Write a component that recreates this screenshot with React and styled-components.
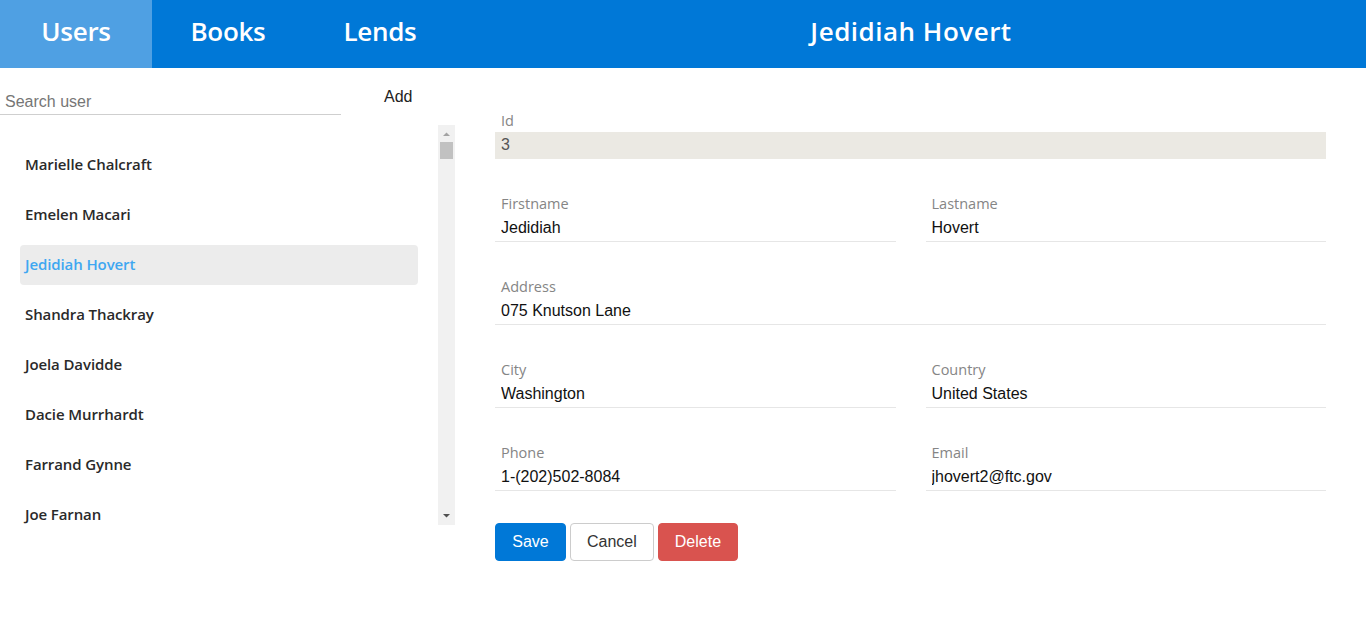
import React, { useState } from 'react'
import styled, { createGlobalStyle } from 'styled-components'

const GlobalStyle = createGlobalStyle`
    html, body {
        margin: 0;
        padding: 0;
        background: #fff;
    }
    * {
        box-sizing: border-box;
    }
`

const users = [
    'Marielle Chalcraft',
    'Emelen Macari',
    'Jedidiah Hovert',
    'Shandra Thackray',
    'Joela Davidde',
    'Dacie Murrhardt',
    'Farrand Gynne',
    'Joe Farnan',
]

const App = () => {
    const [selected, setSelected] = useState(2)
    const [search, setSearch] = useState('')

    return (
        <Layout>
            <GlobalStyle />
            <Header>
                <Tab active>Users</Tab>
                <Tab>Books</Tab>
                <Tab>Lends</Tab>
                <Title>Jedidiah Hovert</Title>
            </Header>
            <Main>
                <Sidebar>
                    <SearchRow>
                        <SearchInput
                            placeholder="Search user"
                            value={search}
                            onChange={(e) => setSearch(e.target.value)}
                        />
                        <AddButton>Add</AddButton>
                    </SearchRow>
                    <ListBox>
                        <UserList>
                            {users.map((name, i) => (
                                <UserItem key={name} active={i === selected} onClick={() => setSelected(i)}>
                                    {name}
                                </UserItem>
                            ))}
                        </UserList>
                        <ScrollTrack>
                            <ScrollArrow>
                                <svg width="17" height="17" viewBox="0 0 17 17">
                                    <polygon points="5,11 8.5,7.5 12,11" fill="#a3a3a3" />
                                </svg>
                            </ScrollArrow>
                            <ScrollThumb />
                            <ScrollSpace />
                            <ScrollArrow>
                                <svg width="17" height="17" viewBox="0 0 17 17">
                                    <polygon points="5,6 8.5,9.5 12,6" fill="#505050" />
                                </svg>
                            </ScrollArrow>
                        </ScrollTrack>
                    </ListBox>
                </Sidebar>
                <Form>
                    <Field>
                        <Label>Id</Label>
                        <Input readOnly disabledLook value="3" />
                    </Field>
                    <Row>
                        <Field>
                            <Label>Firstname</Label>
                            <Input defaultValue="Jedidiah" />
                        </Field>
                        <Field>
                            <Label>Lastname</Label>
                            <Input defaultValue="Hovert" />
                        </Field>
                    </Row>
                    <Field>
                        <Label>Address</Label>
                        <Input defaultValue="075 Knutson Lane" />
                    </Field>
                    <Row>
                        <Field>
                            <Label>City</Label>
                            <Input defaultValue="Washington" />
                        </Field>
                        <Field>
                            <Label>Country</Label>
                            <Input defaultValue="United States" />
                        </Field>
                    </Row>
                    <Row>
                        <Field>
                            <Label>Phone</Label>
                            <Input defaultValue="1-(202)502-8084" />
                        </Field>
                        <Field>
                            <Label>Email</Label>
                            <Input defaultValue="jhovert2@ftc.gov" />
                        </Field>
                    </Row>
                    <Buttons>
                        <Button kind="primary">Save</Button>
                        <Button>Cancel</Button>
                        <Button kind="danger">Delete</Button>
                    </Buttons>
                </Form>
            </Main>
        </Layout>
    )
}

export default App


const Layout = styled.div`
    min-height: 100vh;
    width: 100%;
    display: flex;
    flex-direction: column;
`

const Header = styled.header`
    height: 68px;
    display: flex;
    background-color: #0078d7;
    font-family: "Open Sans", "Noto Sans", sans-serif;
    color: #fff;
`

const Tab = styled.div`
    width: 152px;
    display: flex;
    align-items: center;
    justify-content: center;
    padding-bottom: 7px;
    font-size: 26px;
    font-weight: 600;
    letter-spacing: -0.3px;
    background-color: ${(props) => (props.active ? '#4fa0e3' : 'transparent')};
    cursor: pointer;
`

const Title = styled.h1`
    flex: 1;
    margin: 0;
    display: flex;
    align-items: center;
    justify-content: center;
    padding-bottom: 7px;
    font-size: 26px;
    font-weight: 600;
    letter-spacing: 0.5px;
`

const Main = styled.main`
    display: flex;
`

const Sidebar = styled.aside`
    width: 455px;
    flex-shrink: 0;
    display: flex;
    flex-direction: column;
`

const SearchRow = styled.div`
    display: flex;
    align-items: center;
    padding-top: 17px;
`

const SearchInput = styled.input`
    width: 341px;
    height: 30px;
    border: none;
    border-bottom: 1px solid #cfcfcf;
    padding: 5px 5px 0;
    font-family: "Liberation Sans", Arial, sans-serif;
    font-size: 16px;
    color: #333;
    outline: none;

    &::placeholder {
        color: #767676;
    }
`

const AddButton = styled.button`
    margin-left: 37px;
    margin-bottom: 7px;
    border: none;
    background: none;
    padding: 0 6px;
    font-family: "Liberation Sans", Arial, sans-serif;
    font-size: 16px;
    color: #222;
    cursor: pointer;
`

const ListBox = styled.div`
    margin-top: 10px;
    height: 400px;
    display: flex;
`

const UserList = styled.ul`
    flex: 1;
    list-style: none;
    margin: 0;
    padding: 20px 20px 0;
    overflow: hidden;
    display: flex;
    flex-direction: column;
    gap: 10px;
`

const UserItem = styled.li`
    flex-shrink: 0;
    height: 40px;
    display: flex;
    align-items: center;
    padding: 0 5px 2px;
    border-radius: 4px;
    font-family: "Open Sans", "Noto Sans", sans-serif;
    font-size: 15px;
    font-weight: 600;
    letter-spacing: -0.1px;
    color: ${(props) => (props.active ? '#3ea7f1' : '#2a2a2a')};
    background-color: ${(props) => (props.active ? '#ececec' : 'transparent')};
    cursor: pointer;
`

const ScrollTrack = styled.div`
    width: 17px;
    flex-shrink: 0;
    display: flex;
    flex-direction: column;
    background-color: #f1f1f1;
`

const ScrollArrow = styled.div`
    height: 17px;
    display: flex;

    svg {
        display: block;
    }
`

const ScrollThumb = styled.div`
    height: 17px;
    margin: 0 2px;
    background-color: #c1c1c1;
`

const ScrollSpace = styled.div`
    flex: 1;
`

const Form = styled.form`
    flex: 1;
    padding: 43px 40px 0;
    display: flex;
    flex-direction: column;
    gap: 35px;
`

const Row = styled.div`
    display: grid;
    grid-template-columns: 1fr 1fr;
    gap: 30px;
`

const Field = styled.div`
    display: flex;
    flex-direction: column;
    gap: 1px;
`

const Label = styled.label`
    height: 20px;
    line-height: 20px;
    padding-left: 6px;
    font-family: "Open Sans", "Noto Sans", sans-serif;
    font-size: 14.5px;
    color: #858585;
`

const Input = styled.input.withConfig({
    shouldForwardProp: (prop) => prop !== 'disabledLook',
})`
    height: 27px;
    border: none;
    border-bottom: 1px solid ${(props) => (props.disabledLook ? '#ebe9e3' : '#e6e6e6')};
    padding: 0 6px;
    font-family: "Liberation Sans", Arial, sans-serif;
    font-size: 16px;
    color: ${(props) => (props.disabledLook ? '#555' : '#111')};
    background-color: ${(props) => (props.disabledLook ? '#ebe9e3' : '#fff')};
    outline: none;
`

const Buttons = styled.div`
    display: flex;
    gap: 4px;
    margin-top: -3px;
`

const Button = styled.button.attrs({ type: 'button' })`
    height: 38px;
    min-width: 71px;
    padding: 0 16px;
    border-radius: 4px;
    font-family: "Liberation Sans", Arial, sans-serif;
    font-size: 16px;
    cursor: pointer;
    border: 1px solid
        ${(props) =>
            props.kind === 'primary' ? '#0078d7' : props.kind === 'danger' ? '#d9534f' : '#cccccc'};
    background-color: ${(props) =>
        props.kind === 'primary' ? '#0078d7' : props.kind === 'danger' ? '#d9534f' : '#fff'};
    color: ${(props) => (props.kind ? '#fff' : '#333')};
`
